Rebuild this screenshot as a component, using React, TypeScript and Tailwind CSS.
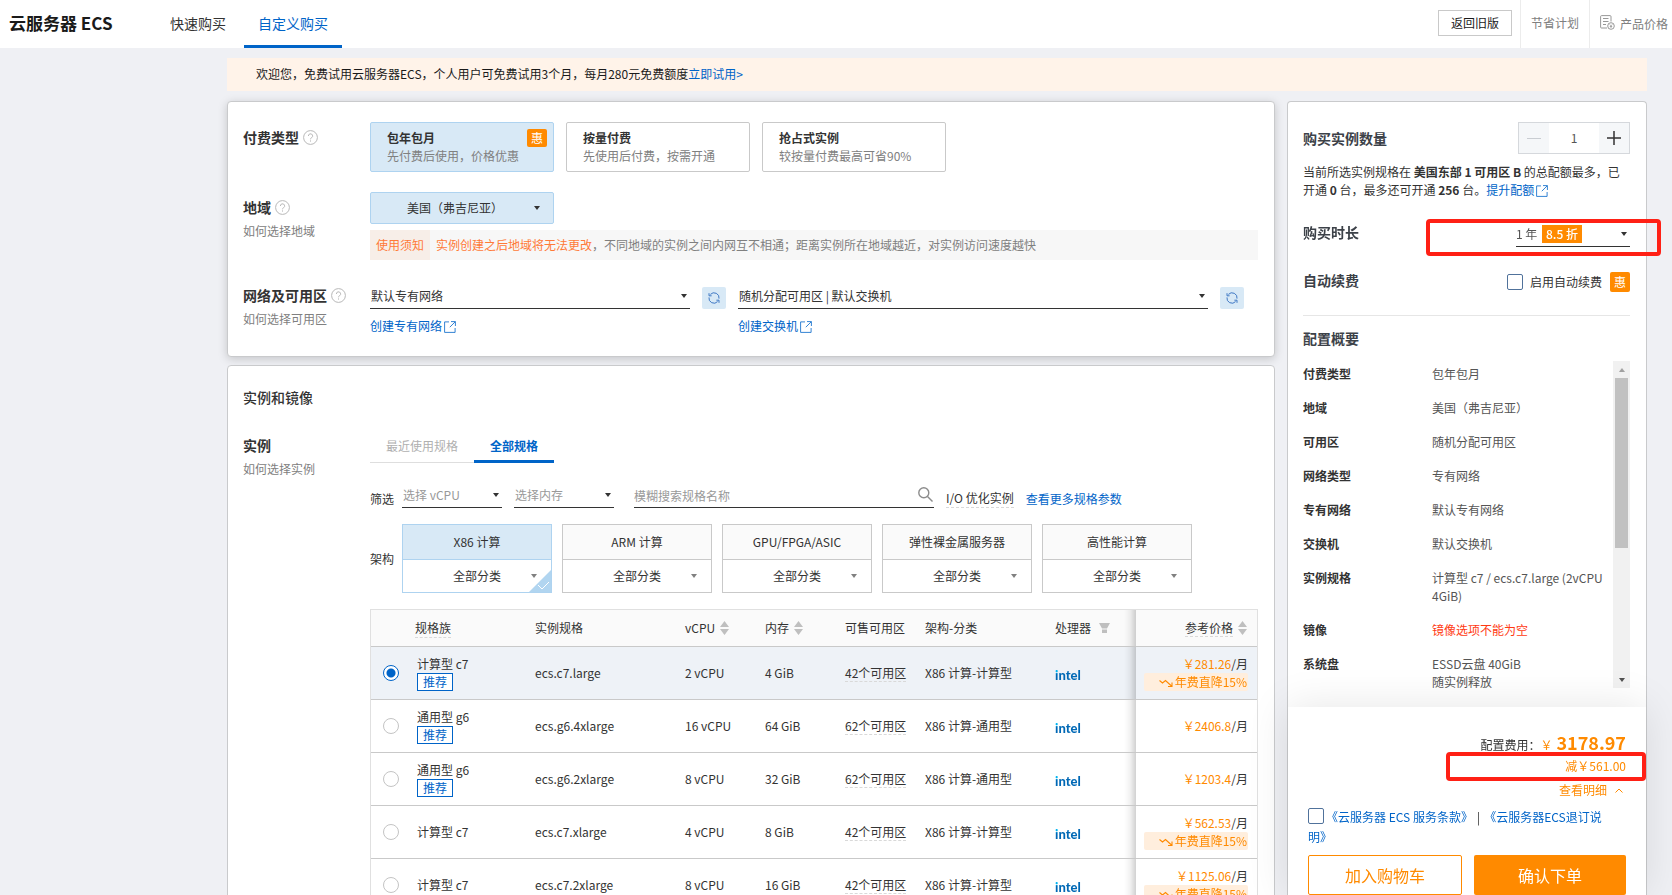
import type { ReactNode } from 'react';
import { clsx } from 'clsx';

const PAY_TYPES = [
  { title: '包年包月', desc: '先付费后使用，价格优惠', hot: true },
  { title: '按量付费', desc: '先使用后付费，按需开通', hot: false },
  { title: '抢占式实例', desc: '较按量付费最高可省90%', hot: false },
];

const ARCHS = ['X86 计算', 'ARM 计算', 'GPU/FPGA/ASIC', '弹性裸金属服务器', '高性能计算'];

const INSTANCES = [
  { family: '计算型 c7', recommended: true, spec: 'ecs.c7.large', cpu: 2, mem: 4, zones: 42, arch: 'X86 计算-计算型', price: '281.26', off: true },
  { family: '通用型 g6', recommended: true, spec: 'ecs.g6.4xlarge', cpu: 16, mem: 64, zones: 62, arch: 'X86 计算-通用型', price: '2406.8', off: false },
  { family: '通用型 g6', recommended: true, spec: 'ecs.g6.2xlarge', cpu: 8, mem: 32, zones: 62, arch: 'X86 计算-通用型', price: '1203.4', off: false },
  { family: '计算型 c7', recommended: false, spec: 'ecs.c7.xlarge', cpu: 4, mem: 8, zones: 42, arch: 'X86 计算-计算型', price: '562.53', off: true },
  { family: '计算型 c7', recommended: false, spec: 'ecs.c7.2xlarge', cpu: 8, mem: 16, zones: 42, arch: 'X86 计算-计算型', price: '1125.06', off: true },
];

const SUMMARY = [
  { label: '付费类型', lines: ['包年包月'] },
  { label: '地域', lines: ['美国（弗吉尼亚）'] },
  { label: '可用区', lines: ['随机分配可用区'] },
  { label: '网络类型', lines: ['专有网络'] },
  { label: '专有网络', lines: ['默认专有网络'] },
  { label: '交换机', lines: ['默认交换机'] },
  { label: '实例规格', lines: ['计算型 c7 / ecs.c7.large (2vCPU 4GiB)'] },
  { label: '镜像', lines: ['镜像选项不能为空'], error: true },
  { label: '系统盘', lines: ['ESSD云盘 40GiB', '随实例释放'] },
];

function Caret({ className = 'text-[#333]' }: { className?: string }) {
  return (
    <svg className={clsx('pointer-events-none', className)} width="6" height="4" viewBox="0 0 6 4" fill="currentColor" aria-hidden="true">
      <path d="M0 0h6L3 4z" />
    </svg>
  );
}

function HelpIcon() {
  return (
    <svg width="15" height="15" viewBox="0 0 15 15" fill="none" stroke="#b8b8b8" aria-hidden="true">
      <circle cx="7.5" cy="7.5" r="6.9" />
      <path d="M5.4 6a2.1 2.1 0 1 1 3.2 1.7c-.8.5-1.1.8-1.1 1.6" />
      <path d="M7.5 10.4v1.2" />
    </svg>
  );
}

function ExternalIcon() {
  return (
    <svg className="ml-0.5 inline-block align-[-2px]" width="12" height="12" viewBox="0 0 12 12" fill="none" stroke="currentColor" strokeWidth="0.8" aria-hidden="true">
      <path d="M5 .9H.6v10.5h10.5V7" />
      <path d="M7 .6h4.4V5M11.2.8 5.8 6.2" />
    </svg>
  );
}

function RefreshButton({ label }: { label: string }) {
  return (
    <button type="button" aria-label={label} className="flex h-[22px] w-6 shrink-0 items-center justify-center rounded-xs bg-[#d8e9f6] text-[#3f78c4]">
      <svg width="12" height="12" viewBox="0 0 12 12" fill="none" stroke="currentColor" aria-hidden="true">
        <path d="M2.4 2.4A5 5 0 0 1 11 6.6M9.6 9.6A5 5 0 0 1 1 5.4" />
        <path d="M1 1.2v2.600h2.600M11 10.800V8.200H8.400" />
      </svg>
    </button>
  );
}

function SortIcon() {
  return (
    <svg width="9" height="14" viewBox="0 0 9 14" fill="#bfbfbf" aria-hidden="true">
      <path d="M4.5 0 9 6H0zM4.5 14 9 8H0z" />
    </svg>
  );
}

function FieldLabel({ title, hint, help = true }: { title: string; hint?: string; help?: boolean }) {
  return (
    <div className="w-[127px] shrink-0 pt-[5px]">
      <div className="flex items-center gap-1 text-sm/5 font-bold">
        {title}
        {help && <HelpIcon />}
      </div>
      {hint && (
        <a href="#" className="mt-[5px] block leading-[18px] text-[#808080]">
          {hint}
        </a>
      )}
    </div>
  );
}

function LineSelect({ label, value, className, muted }: { label: string; value: string; className?: string; muted?: boolean }) {
  return (
    <div className={clsx('relative h-[25px] border-b border-[#333]', className)}>
      <select
        aria-label={label}
        className={clsx('block h-6 w-full appearance-none bg-transparent pl-px leading-6 outline-none', muted ? 'text-[#999]' : 'text-[#333]')}
      >
        <option>{value}</option>
      </select>
      <Caret className="absolute top-2.5 right-[3px] text-[#333]" />
    </div>
  );
}

function HotBadge({ className }: { className?: string }) {
  return <span className={clsx('flex w-5 items-center justify-center rounded-xs bg-[#ff8a00] text-white', className)}>惠</span>;
}

function Card({ children, className }: { children: ReactNode; className?: string }) {
  return <section className={clsx('rounded-sm border border-[#c9cacc] bg-white pr-4 pl-[15px]', className)}>{children}</section>;
}

function Header() {
  return (
    <header className="flex h-12 shrink-0 items-stretch bg-white">
      <h1 className="w-[147px] shrink-0 pl-[9px] text-[17px] leading-[45px] font-bold text-[#1a1a1a]">云服务器 ECS</h1>
      <nav className="ml-[9px] flex flex-1 gap-1 text-sm leading-[46px]">
        <a href="#" className="px-3.5">快速购买</a>
        <a href="#" className="border-b-3 border-[#0064c8] px-3.5 text-[#0064c8]">自定义购买</a>
      </nav>
      <div className="flex items-stretch leading-[46px] text-[#808080]">
        <button type="button" className="mt-2.5 mr-2 h-[26px] w-[74px] border border-[#c9c9c9] leading-6 text-[#1a1a1a]">返回旧版</button>
        <a href="#" className="border-l border-[#ececec] px-2.5">节省计划</a>
        <a href="#" className="flex items-center gap-[5px] border-l border-[#ececec] pr-1 pl-2.5">
          <svg className="mb-1" width="15" height="15" viewBox="0 0 15 15" fill="none" stroke="#8c8c8c" strokeWidth="0.9" aria-hidden="true">
            <path d="M7 13H1.500A1 1 0 0 1 .6 12V1.600A1 1 0 0 1 1.500.6h8.600a1 1 0 0 1 .9 1V6.500" />
            <path d="M3 3.500h5.500M3 6.500h5.500M3 9.500h3" />
            <circle cx="11" cy="11" r="3.300" />
            <path d="m9.700 9.400 1.300 1.500 1.300-1.500M11 11v2M9.800 11.500h2.400" strokeWidth="0.7" />
          </svg>
          <span>产品价格</span>
        </a>
      </div>
    </header>
  );
}

function BasicCard() {
  return (
    <Card className="pt-5 pb-5 shadow-[0_2px_10px_rgba(0,0,0,0.18)]">
      <div className="flex">
        <FieldLabel title="付费类型" />
        <div className="flex gap-3">
          {PAY_TYPES.map((p) => (
            <button
              key={p.title}
              type="button"
              className={clsx('relative h-[50px] w-[184px] rounded-xs border pl-4 text-left leading-[18px]', p.hot ? 'border-[#aed3f0] bg-[#d8e9f6]' : 'border-[#c9c9c9] bg-white')}
            >
              <span className="block font-bold">{p.title}</span>
              <span className="block text-[#808080]">{p.desc}</span>
              {p.hot && <HotBadge className="absolute top-1.5 right-1.5 h-[18px]" />}
            </button>
          ))}
        </div>
      </div>

      <div className="mt-5 flex">
        <FieldLabel title="地域" hint="如何选择地域" />
        <div className="min-w-0 flex-1">
          <div className="relative w-[184px]">
            <select aria-label="地域" className="block h-8 w-full appearance-none rounded-xs border border-[#aed3f0] bg-[#d8e9f6] pl-9 outline-none">
              <option>美国（弗吉尼亚）</option>
            </select>
            <Caret className="absolute top-3.5 right-3.5 text-[#333]" />
          </div>
          <p className="mt-1.5 flex h-[30px] bg-[#f7f7f7] leading-[30px] text-[#808080]">
            <span className="mr-1.5 bg-[#f7eee8] px-1.5 text-[#ff7a38]">使用须知</span>
            <span className="text-[#ff7a38]">实例创建之后地域将无法更改</span>
            <span>，不同地域的实例之间内网互不相通；距离实例所在地域越近，对实例访问速度越快</span>
          </p>
        </div>
      </div>

      <div className="mt-5 flex">
        <FieldLabel title="网络及可用区" hint="如何选择可用区" />
        <div className="flex min-w-0 flex-1 gap-3 pt-1 pr-3.5">
          <div className="w-[356px]">
            <div className="flex items-end gap-3">
              <LineSelect label="专有网络" value="默认专有网络" className="flex-1" />
              <RefreshButton label="刷新专有网络" />
            </div>
            <a href="#" className="mt-2 mb-px block leading-[18px] text-[#0064c8]">创建专有网络<ExternalIcon /></a>
          </div>
          <div className="flex-1">
            <div className="flex items-end gap-3">
              <LineSelect label="交换机" value="随机分配可用区 | 默认交换机" className="flex-1" />
              <RefreshButton label="刷新交换机" />
            </div>
            <a href="#" className="mt-2 mb-px block leading-[18px] text-[#0064c8]">创建交换机<ExternalIcon /></a>
          </div>
        </div>
      </div>
    </Card>
  );
}

function ArchPicker() {
  return (
    <div className="mt-4 flex items-center">
      <span className="w-8 shrink-0">架构</span>
      <div className="flex gap-2.5">
        {ARCHS.map((name, i) => (
          <div key={name} className={clsx('relative w-[150px] border', i === 0 ? 'border-[#aed3f0]' : 'border-[#c9c9c9]')}>
            <button type="button" className={clsx('block h-[35px] w-full border-b', i === 0 ? 'border-[#aed3f0] bg-[#d8e9f6]' : 'border-[#c9c9c9] bg-[#fafafa]')}>
              {name}
            </button>
            <div className="relative">
              {i === 0 && (
                <svg className="absolute right-0 bottom-0" width="22" height="22" viewBox="0 0 22 22" aria-hidden="true">
                  <path d="M22 0v22H0z" fill="#b1d5f0" />
                  <path d="m9 15 4 4 7-7" fill="none" stroke="#fff" />
                </svg>
              )}
              <select aria-label={`${name}分类`} className="relative block h-8 w-full appearance-none bg-transparent pl-[50px] outline-none">
                <option>全部分类</option>
              </select>
              <Caret className="absolute top-3.5 right-3.5 text-[#808080]" />
            </div>
          </div>
        ))}
      </div>
    </div>
  );
}

function IntelLogo() {
  // the dot of the "i" is cyan, the rest is intel blue
  return (
    <span className="mt-1 inline-block bg-[radial-gradient(circle_at_2px_3px,#00b4f0_3px,#0068b5_4px)] bg-clip-text font-['Lato'] text-[13px]/4 font-black text-transparent">
      intel
    </span>
  );
}

function InstanceTable() {
  const head = 'h-[37px] border-b border-[#c9c9c9] bg-[#fafafa] text-left font-normal';
  const cell = 'h-[53px] border-b border-[#c9c9c9]';
  const pinned =
    "sticky right-0 before:absolute before:inset-y-0 before:-left-3 before:w-3 before:bg-linear-to-l before:from-black/18 before:via-black/5 before:to-transparent before:content-['']";

  return (
    <div className="mt-4 border border-[#e0e0e0]">
      <table className="w-full table-fixed border-separate border-spacing-0">
        <colgroup>
          <col className="w-11" />
          <col className="w-[120px]" />
          <col className="w-[150px]" />
          <col className="w-20" />
          <col className="w-20" />
          <col className="w-20" />
          <col className="w-[130px]" />
          <col />
          <col className="w-[121px]" />
        </colgroup>
        <thead>
          <tr>
            <th className={head} />
            <th className={head}><span className="border-b border-dashed border-[#d9d9d9] pb-px">规格族</span></th>
            <th className={head}>实例规格</th>
            <th className={head}><span className="flex items-center gap-[5px]">vCPU <SortIcon /></span></th>
            <th className={head}><span className="flex items-center gap-[5px]">内存 <SortIcon /></span></th>
            <th className={head}>可售可用区</th>
            <th className={head}>架构-分类</th>
            <th className={head}>
              <span className="flex items-center gap-2">
                处理器
                <svg width="11" height="10" viewBox="0 0 11 10" fill="#bfbfbf" aria-hidden="true"><path d="M0 0h11L8 5.500H3zM3 6.500h5V10H3z" /></svg>
              </span>
            </th>
            <th className={clsx(head, pinned, 'pr-2.5')}>
              <span className="flex items-center justify-end gap-[5px]">
                <span className="border-b border-dashed border-[#d9d9d9]">参考价格</span>
                <SortIcon />
              </span>
            </th>
          </tr>
        </thead>
        <tbody>
          {INSTANCES.map((row, i) => {
            const bg = i === 0 ? 'bg-[#eef2f7]' : 'bg-white';
            return (
              <tr key={row.spec} className={bg}>
                <td className={cell}>
                  <input
                    type="radio"
                    name="instance"
                    aria-label={row.spec}
                    defaultChecked={i === 0}
                    className="ml-3 block size-4 appearance-none rounded-full border border-[#c4c4c4] bg-white checked:border-[#0064c8] checked:bg-[radial-gradient(#0064c8_0_4px,#fff_5px)]"
                  />
                </td>
                <td className={clsx(cell, 'pl-0.5 leading-[18px]')}>
                  <div>{row.family}</div>
                  {row.recommended && <span className="flex h-[18px] w-9 items-center justify-center border border-[#0064c8] bg-white text-[#0064c8]">推荐</span>}
                </td>
                <td className={cell}>{row.spec}</td>
                <td className={cell}>{row.cpu} vCPU</td>
                <td className={cell}>{row.mem} GiB</td>
                <td className={cell}><span className="border-b border-dashed border-[#d9d9d9]">{row.zones}个可用区</span></td>
                <td className={cell}>{row.arch}</td>
                <td className={cell}><IntelLogo /></td>
                <td className={clsx(cell, pinned, bg, 'pr-[9px] text-right leading-[18px]')}>
                  <div><span className="text-[#ff8a00]">￥{row.price}</span>/月</div>
                  {row.off && (
                    <div className="ml-2 flex h-[18px] items-center justify-end gap-0.5 rounded-xs bg-[#ffeedd] pr-px text-[#ff8a00]">
                      <svg className="mt-0.5" width="14" height="8" viewBox="0 0 14 8" fill="none" stroke="currentColor" strokeWidth="1.100" aria-hidden="true">
                        <path d="M.5 1.500 3.500 4 6.500 1.500 12.500 7M13 3.500v4H9" />
                      </svg>
                      年费直降15%
                    </div>
                  )}
                </td>
              </tr>
            );
          })}
        </tbody>
      </table>
    </div>
  );
}

function InstanceCard() {
  return (
    <Card className="mt-2 pt-[21px] pb-5">
      <h2 className="text-sm/5 font-medium">实例和镜像</h2>
      <div className="mt-[23px] flex">
        <FieldLabel title="实例" hint="如何选择实例" help={false} />
        <div className="min-w-0 flex-1">
          <div className="flex h-[33px] leading-8">
            <button type="button" className="border-b border-[#dedede] px-4 text-[#b0b0b0]">最近使用规格</button>
            <button type="button" className="border-b-3 border-[#0064c8] px-4 font-bold text-[#0064c8]">全部规格</button>
          </div>
          <div className="mt-5 flex items-end">
            <span className="w-8 shrink-0 leading-[18px]">筛选</span>
            <LineSelect label="vCPU" value="选择 vCPU" muted className="w-[100px]" />
            <LineSelect label="内存" value="选择内存" muted className="ml-3 w-[100px]" />
            <div className="relative ml-5 h-[25px] w-[300px] border-b border-[#333]">
              <input type="text" aria-label="搜索规格" placeholder="模糊搜索规格名称" className="block h-[25px] w-full pr-6 outline-none placeholder:text-[#999]" />
              <svg className="absolute top-1 right-px" width="15" height="15" viewBox="0 0 15 15" fill="none" stroke="#8c8c8c" strokeWidth="1.400" aria-hidden="true">
                <circle cx="5.800" cy="5.800" r="5" />
                <path d="m9.500 9.500 5 5" />
              </svg>
            </div>
            <span className="ml-3 border-b border-dashed border-[#d9d9d9] leading-[18px]">I/O 优化实例</span>
            <a href="#" className="ml-3 leading-[18px] text-[#0064c8]">查看更多规格参数</a>
          </div>
          <ArchPicker />
          <InstanceTable />
        </div>
      </div>
    </Card>
  );
}

function OrderPanel() {
  const box = 'size-4 shrink-0 appearance-none rounded-xs border border-[#50729b] bg-white';
  return (
    <aside className="flex w-[360px] shrink-0 flex-col rounded-t-sm border border-b-0 border-[#c9cacc] bg-white">
      <div className="flex min-h-0 flex-1 flex-col pt-5 pr-4 pl-[15px]">
        <div className="flex h-8 items-center justify-between">
          <label htmlFor="count" className="text-sm/5 font-bold text-[#3c4148]">购买实例数量</label>
          <div className="flex h-8 w-28 border border-[#d5d8dc]">
            <button type="button" aria-label="减少" className="flex w-[30px] items-center justify-center bg-[#f5f7f9]"><span className="h-px w-3.5 bg-[#c9cdd2]" /></button>
            <input id="count" type="text" defaultValue="1" className="w-[50px] text-center text-[#555] outline-none" />
            <button type="button" aria-label="增加" className="flex w-[30px] items-center justify-center bg-[#f5f7f9]">
              <svg width="14" height="14" viewBox="0 0 14 14" stroke="#333" strokeWidth="1.500" aria-hidden="true"><path d="M7 0v14M0 7h14" /></svg>
            </button>
          </div>
        </div>
        <p className="mt-[9px] leading-[18px]">
          当前所选实例规格在 <b>美国东部 1 可用区 B</b> 的总配额最多，已开通 <b>0</b> 台，最多还可开通 <b>256</b> 台。
          <a href="#" className="text-[#0064c8]">提升配额<ExternalIcon /></a>
        </p>

        <div className="relative mt-[21px] flex h-[27px] items-start justify-between">
          <span className="pt-0.5 text-sm/5 font-bold text-[#3c4148]">购买时长</span>
          <button type="button" aria-haspopup="listbox" aria-label="购买时长" className="flex h-[27px] w-[114px] items-center border-b border-[#333] pt-0.5 text-[#555]">
            <span className="w-[26px] text-left">1 年</span>
            <span className="h-[18px] bg-[#ff8a00] px-1 leading-[18px] font-medium text-white">8.5 折</span>
            <Caret className="mr-[3px] ml-auto text-[#333]" />
          </button>
          <span className="pointer-events-none absolute -top-px -right-[31px] h-[37px] w-[235px] rounded-sm border-4 border-[#ff2015]" />
        </div>

        <div className="mt-[25px] flex h-5 items-center">
          <span className="flex-1 pb-1 text-sm/5 font-bold text-[#3c4148]">自动续费</span>
          <label className="flex items-center gap-[7px]"><input type="checkbox" className={clsx(box, 'block')} />启用自动续费</label>
          <HotBadge className="ml-2 h-5" />
        </div>

        <hr className="mt-[23px] border-[#e6e6e6]" />
        <h2 className="mt-3 text-sm/5 font-bold text-[#3c4148]">配置概要</h2>

        <div className="mt-[13px] mb-[19px] flex min-h-0 flex-1">
          <dl className="-mb-1 flex-1 space-y-4 overflow-hidden pt-1 pr-1">
            {SUMMARY.map((s) => (
              <div key={s.label} className="flex leading-[18px]">
                <dt className="w-[129px] shrink-0 font-bold">{s.label}</dt>
                <dd className={s.error ? 'text-[#ff3a12]' : 'text-[#555]'}>
                  {s.lines.map((line) => (
                    <div key={line}>{line}</div>
                  ))}
                </dd>
              </div>
            ))}
          </dl>
          {/* scrollbar */}
          <div className="flex w-[17px] flex-col items-center bg-[#f1f1f1]">
            <div className="flex h-[17px] items-center"><Caret className="rotate-180 text-[#a0a0a0]" /></div>
            <div className="h-[170px] w-[13px] bg-[#c1c1c1]" />
            <div className="mt-auto flex h-[17px] items-center"><Caret className="text-[#505050]" /></div>
          </div>
        </div>
      </div>

      <div className="relative bg-white px-5 pt-[21px] shadow-[0_0_40px_rgba(0,0,0,0.1)]">
        <div className="mb-px flex h-7 items-baseline justify-end leading-7">
          配置费用：
          <span className="mr-1 text-[#ff8a00]">￥</span>
          <span className="text-lg/7 font-bold text-[#ff8a00]">3178.97</span>
        </div>
        <div className="relative text-right leading-[18px] text-[#ff8a00]">
          减￥561.00
          <span className="pointer-events-none absolute -top-[5px] -right-5 h-[29px] w-[200px] rounded-sm border-4 border-[#ff2015]" />
        </div>
        <button type="button" className="mt-1.5 ml-auto flex items-center gap-2 pr-[3px] leading-[18px] text-[#ff8a00]">
          查看明细
          <svg width="8" height="5" viewBox="0 0 8 5" fill="none" stroke="currentColor" aria-hidden="true"><path d="m.5 4.500 3.500-3.500 3.500 3.500" /></svg>
        </button>
        <div className="mt-2 pr-3 leading-5 text-[#0064c8]">
          <input id="terms" type="checkbox" aria-label="同意服务条款" className={clsx(box, 'mr-0.5 inline-block align-text-top')} />
          <a href="#">《云服务器 ECS 服务条款》</a>
          <span className="mr-1 ml-1 text-[#333]">|</span>
          <a href="#">《云服务器ECS退订说明》</a>
        </div>
        <div className="mt-2 flex gap-3 text-base">
          <button type="button" className="h-10 flex-1 rounded-xs border border-[#ff8a00] text-[#ff8a00]">加入购物车</button>
          <button type="button" className="h-10 flex-1 rounded-xs bg-[#ff8a00] text-white">确认下单</button>
        </div>
      </div>
    </aside>
  );
}

export default function App() {
  return (
    <div className="flex h-screen flex-col overflow-hidden bg-[#eff0f4] font-['Noto_Sans_CJK_SC',sans-serif] text-xs text-[#333]">
      <Header />
      <main className="flex min-h-0 flex-1 flex-col pt-2.5 pr-[25px] pl-[227px]">
        <p className="h-[33px] shrink-0 bg-[#fff3e9] pl-[29px] leading-8 text-[#1a1a1a]">
          欢迎您，免费试用云服务器ECS，个人用户可免费试用3个月，每月280元免费额度<a href="#" className="text-[#0064c8]">立即试用&gt;</a>
        </p>
        <div className="mt-2.5 flex min-h-0 flex-1 gap-3">
          <div className="min-w-0 flex-1">
            <BasicCard />
            <InstanceCard />
          </div>
          <OrderPanel />
        </div>
      </main>
    </div>
  );
}
